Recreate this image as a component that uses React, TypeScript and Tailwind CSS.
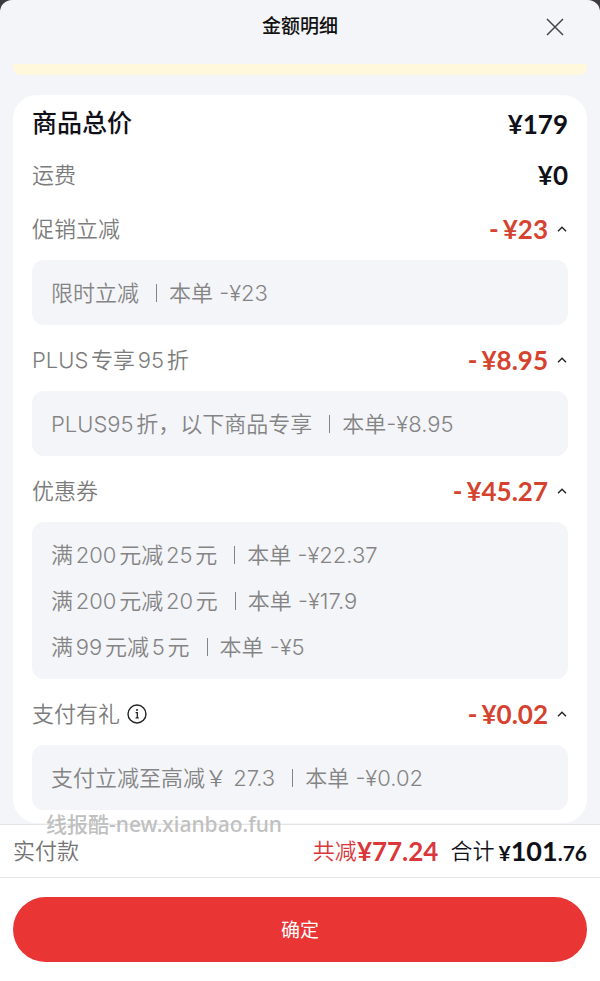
import { useState } from "react";
import type { ReactNode } from "react";

type Discount = {
  id: string;
  label: string;
  amount: string;
  info?: boolean;
  lines: { name: string; value: string }[];
};

const discounts: Discount[] = [
  {
    id: "promo",
    label: "促销立减",
    amount: "¥23",
    lines: [{ name: "限时立减", value: "本单 -¥23" }],
  },
  {
    id: "plus",
    label: "PLUS专享95折",
    amount: "¥8.95",
    lines: [{ name: "PLUS95折，以下商品专享", value: "本单-¥8.95" }],
  },
  {
    id: "coupon",
    label: "优惠券",
    amount: "¥45.27",
    lines: [
      { name: "满200元减25元", value: "本单 -¥22.37" },
      { name: "满200元减20元", value: "本单 -¥17.9" },
      { name: "满99元减5元", value: "本单 -¥5" },
    ],
  },
  {
    id: "payment",
    label: "支付有礼",
    amount: "¥0.02",
    info: true,
    lines: [{ name: "支付立减至高减￥ 27.3", value: "本单 -¥0.02" }],
  },
];

function Price({ children }: { children: ReactNode }) {
  return <span className="font-['Lato','Noto_Sans_CJK_SC',sans-serif] text-[26px] font-bold">{children}</span>;
}

function InfoIcon() {
  return (
    <svg viewBox="0 0 20 20" className="size-5" fill="none" stroke="currentColor" strokeWidth="1.4" aria-hidden="true">
      <circle cx="10" cy="10" r="9" />
      <path d="M8.6 8.7h1.7v5M8.6 13.8h3.2" strokeWidth="1.3" />
      <circle cx="10" cy="6" r="1" fill="currentColor" stroke="none" />
    </svg>
  );
}

function DiscountGroup({ item }: { item: Discount }) {
  const [open, setOpen] = useState(true);
  return (
    <section className="mb-1 last:mb-0">
      <div className="flex h-[62px] items-center justify-between">
        <div className="flex items-center gap-[7px]">
          <h2 className="text-[22px] font-[350] text-[#7c7c7c]">{item.label}</h2>
          {item.info && (
            <button type="button" aria-label="支付有礼说明" className="text-[#222222]">
              <InfoIcon />
            </button>
          )}
        </div>
        <button
          type="button"
          aria-expanded={open}
          aria-label={`${item.label} -${item.amount}`}
          onClick={() => setOpen(!open)}
          className="flex items-center text-[#d5432f]"
        >
          <span className="flex items-center gap-1">
            <Price>-</Price>
            <Price>{item.amount}</Price>
          </span>
          <svg
            viewBox="0 0 10 6"
            className={open ? "mr-px ml-[9px] h-[6px] w-[10px] text-[#222222]" : "mr-px ml-[9px] h-[6px] w-[10px] rotate-180 text-[#222222]"}
            fill="none"
            stroke="currentColor"
            strokeWidth="1.4"
            aria-hidden="true"
          >
            <path d="M1 5.2 5 1.2l4 4" />
          </svg>
        </button>
      </div>
      {open && (
        <ul className="rounded-xl bg-[#f4f5f9] px-[19px] pt-[10px] pb-[9px]">
          {item.lines.map((line) => (
            <li key={line.name} className="flex h-[46px] items-center text-[22px] font-[350] whitespace-nowrap text-[#848484]">
              <span>{line.name}</span>
              <span className="mr-3 ml-[17px] h-[18px] w-px bg-[#848484]" />
              <span>{line.value}</span>
            </li>
          ))}
        </ul>
      )}
    </section>
  );
}

export default function App() {
  return (
    <div className="min-h-screen bg-[#3c3c3e] font-['Inter','Noto_Sans_CJK_SC',sans-serif] [text-autospace:normal]">
      <div className="relative flex min-h-screen flex-col rounded-t-xl bg-[#f4f5f9]">
        <header className="grid h-16 grid-cols-[1fr_auto_1fr] px-[35px] pb-[10px]">
          <h1 className="col-start-2 self-center text-[19px] font-medium text-[#111111]">金额明细</h1>
          <button type="button" aria-label="关闭" className="self-center justify-self-end text-[#444444]">
            <svg viewBox="0 0 20 20" className="size-5" fill="none" stroke="currentColor" strokeWidth="1.5" aria-hidden="true">
              <path d="m2 2 16 16M18 2 2 18" />
            </svg>
          </button>
        </header>

        <main className="flex-1 px-[13px]">
          <div className="mb-5 h-[11px] rounded-b-lg bg-[#fff8dd]" />
          <div className="rounded-3xl bg-white px-[19px] pb-[13px]">
            <div className="flex h-[58px] items-center justify-between text-[#101018]">
              <h2 className="text-[25px] font-medium">商品总价</h2>
              <Price>¥179</Price>
            </div>
            <div className="flex h-[45px] items-center justify-between">
              <h2 className="text-[22px] font-[350] text-[#7c7c7c]">运费</h2>
              <span className="text-[#101018]">
                <Price>¥0</Price>
              </span>
            </div>
            {discounts.map((item) => (
              <DiscountGroup key={item.id} item={item} />
            ))}
          </div>
        </main>

        <footer className="relative bg-white">
          <p className="absolute -top-[14px] left-[46px] text-[21px] leading-7 whitespace-nowrap text-[#c0c0c0] font-['Noto_Sans','Noto_Sans_CJK_SC',sans-serif] font-medium">
            线报酷-new.xianbao.fun
          </p>
          <div className="flex h-[54px] items-center border-y border-[#e4e4e6] px-[13px] text-[22px] font-[350]">
            <span className="text-[#747474]">实付款</span>
            <span className="ml-auto flex items-center text-[#d9373a]">
              <span>共减</span>
              <Price>¥77.24</Price>
            </span>
            <span className="ml-3 flex items-center text-[#101018]">
              <span className="mr-1">合计</span>
              <span className="font-['Lato',sans-serif] text-[21px] font-bold">
                ¥<span className="text-[27px]">101</span>.76
              </span>
            </span>
          </div>
          <div className="px-[13px] py-[19px]">
            <button type="button" className="h-[65px] w-full rounded-full bg-[#ea3535] pt-[3px] text-[19px] text-white">
              确定
            </button>
          </div>
        </footer>
      </div>
    </div>
  );
}
